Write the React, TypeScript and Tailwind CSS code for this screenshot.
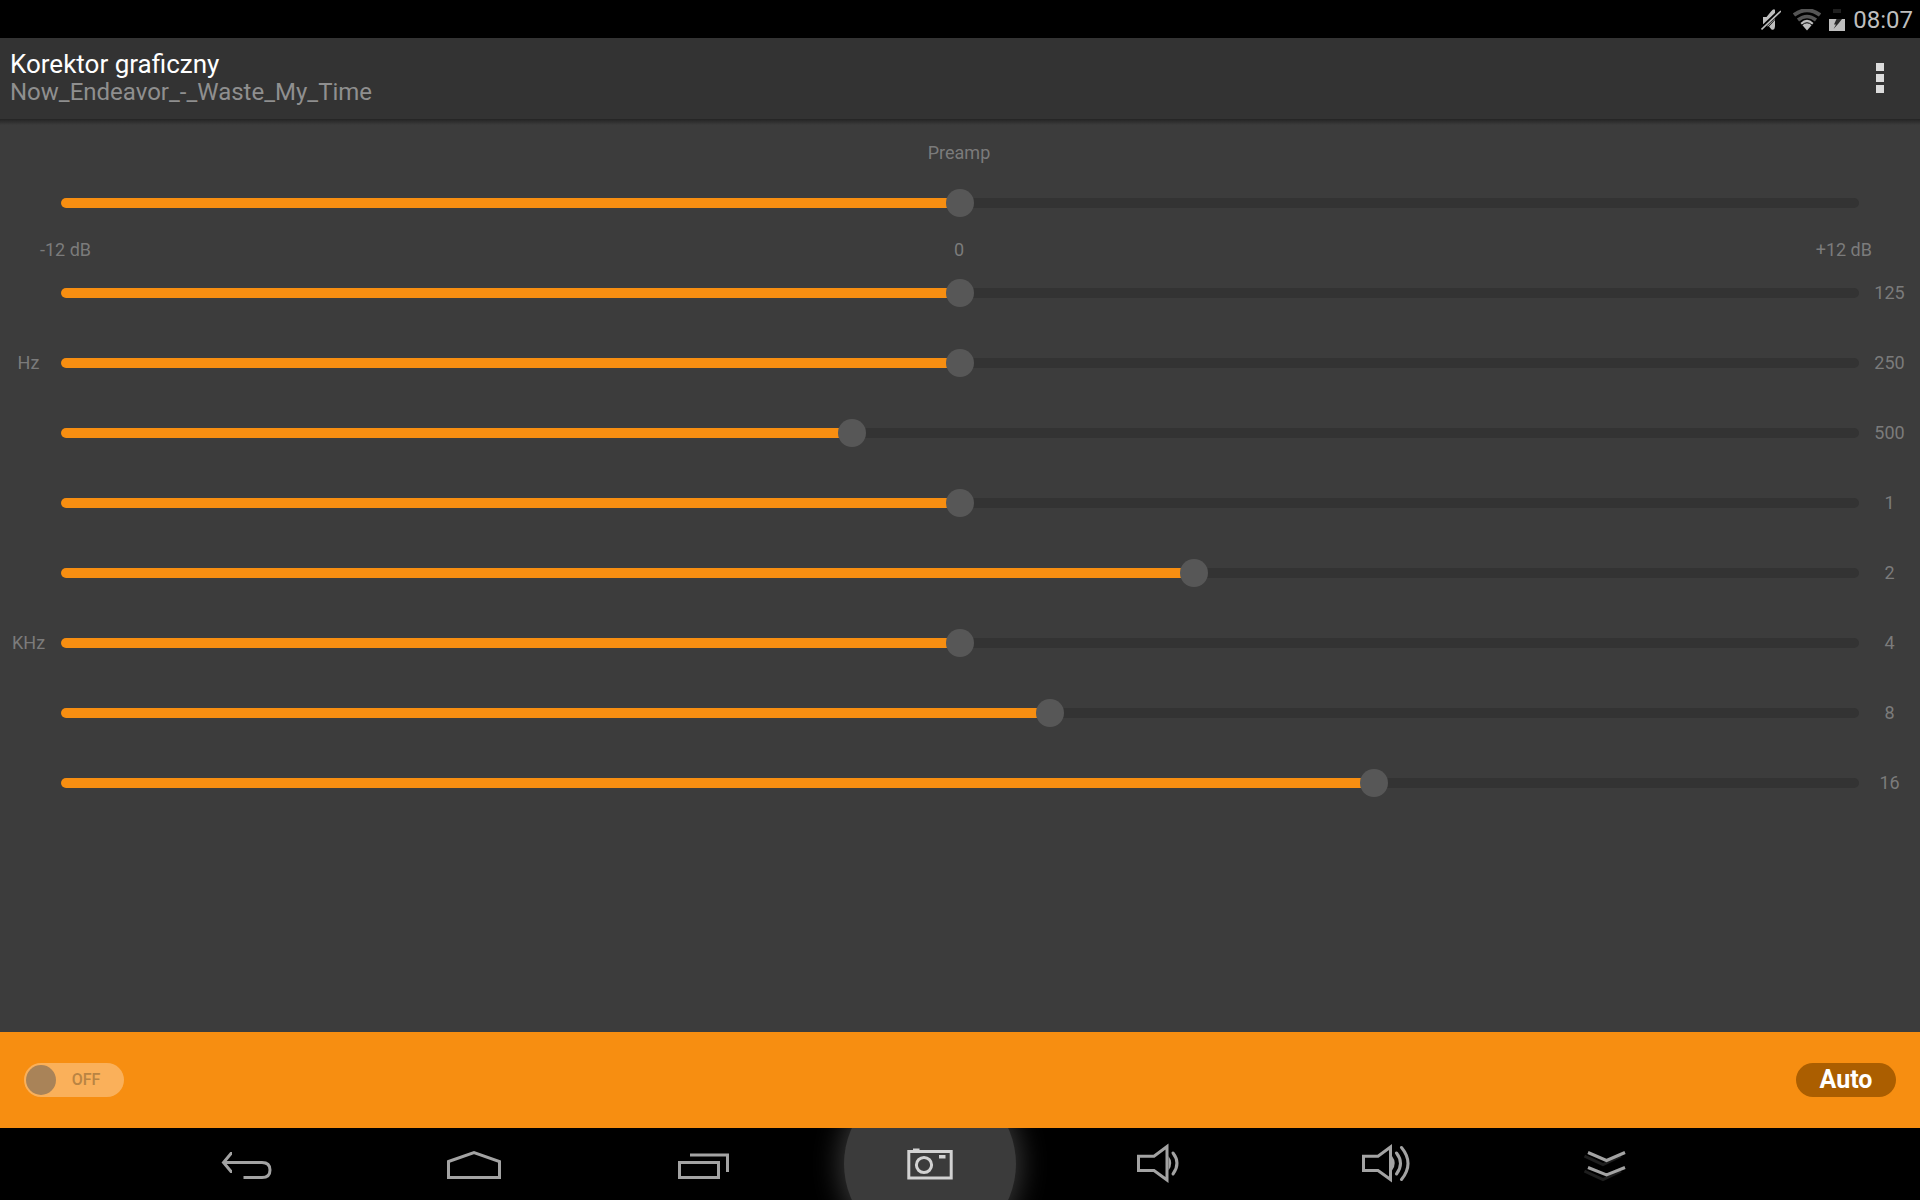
import { useState } from "react";
import type { ReactNode } from "react";

type Band = { label: string; name: string; value: number };

const hzBands: Band[] = [
  { label: "125", name: "125 Hz", value: 0 },
  { label: "250", name: "250 Hz", value: 0 },
  { label: "500", name: "500 Hz", value: -1.44 },
];

const khzBands: Band[] = [
  { label: "1", name: "1 KHz", value: 0 },
  { label: "2", name: "2 KHz", value: 3.12 },
  { label: "4", name: "4 KHz", value: 0 },
  { label: "8", name: "8 KHz", value: 1.2 },
  { label: "16", name: "16 KHz", value: 5.52 },
];

function Slider({ id, initial }: { id: string; initial: number }) {
  const [value, setValue] = useState(initial);
  return (
    <div className="grid h-14 flex-1 items-center">
      <div className="col-start-1 row-start-1 mx-3.5 h-2.5 overflow-hidden rounded-full bg-[#333333]">
        <div className="h-full bg-[#f78e11]" style={{ width: `${((value + 12) / 24) * 100}%` }} />
      </div>
      <input
        id={id}
        type="range"
        min={-12}
        max={12}
        step={0.24}
        value={value}
        onChange={(e) => setValue(Number(e.target.value))}
        className="z-10 col-start-1 row-start-1 h-7 w-full cursor-pointer appearance-none bg-transparent [&::-webkit-slider-thumb]:size-7 [&::-webkit-slider-thumb]:appearance-none [&::-webkit-slider-thumb]:rounded-full [&::-webkit-slider-thumb]:bg-[#575757]"
      />
    </div>
  );
}

function BandGroup({ unit, bands }: { unit: string; bands: Band[] }) {
  return (
    <section className="flex items-center px-3">
      <h2 className="w-[35px] pr-0.5 text-center">{unit}</h2>
      <div className="flex flex-1 flex-col gap-3.5">
        {bands.map((b) => (
          <div key={b.name} className="flex items-center">
            <Slider id={b.name.replace(" ", "-")} initial={b.value} />
            <label htmlFor={b.name.replace(" ", "-")} className="flex w-[35px] justify-center pr-0.5">
              {b.label}
            </label>
          </div>
        ))}
      </div>
    </section>
  );
}

function NavButton({ name, children, active }: { name: string; children: ReactNode; active?: boolean }) {
  return (
    <button
      type="button"
      aria-label={name}
      className={
        active
          ? "flex flex-1 basis-0 items-center justify-center text-[#d2d2d2]"
          : "flex flex-1 basis-0 items-center justify-center text-[#a3a3a3]"
      }
    >
      <span
        className={
          active
            ? "flex size-[172px] shrink-0 items-center justify-center rounded-full bg-[#3b3b3b] shadow-[0_0_28px_4px_#3a3a3a]"
            : "flex items-center justify-center"
        }
      >
        <svg viewBox="0 0 60 60" className="size-15" fill="none" stroke="currentColor" strokeWidth="3" aria-hidden="true">
          {children}
        </svg>
      </span>
    </button>
  );
}

function StatusBar() {
  return (
    <div className="flex h-[38px] items-center justify-end bg-black pt-0.5 pr-[7px] text-[#bebebe]">
      <svg viewBox="0 0 20 22" className="mr-3 h-[22px] w-5" aria-hidden="true">
        <path d="M2 8h3.500L10 2.500Q13 -1 14 1v9L7 17.500 2 15Z" fill="currentColor" />
        <path d="M8 17.500 14 11V17Q13.500 22 10.500 20.500Z" fill="currentColor" />
        <path d="M0 20 19 2" stroke="#000000" strokeWidth="4" />
        <path d="M.500 20.500 20 2" stroke="currentColor" strokeWidth="1.600" />
      </svg>
      <svg viewBox="0 0 28 22" className="mr-2 h-[22px] w-7" fill="none" aria-hidden="true">
        <path d="M1 6Q14 -3.500 27 6" stroke="#555555" strokeWidth="4" />
        <path d="M5 11Q14 4 23 11" stroke="#555555" strokeWidth="3.500" />
        <path d="M7.500 14Q14 7.500 20.500 14L14 21.500Z" fill="currentColor" />
        <path d="M9 16Q14 11.500 19 16" stroke="#000000" strokeWidth="1" />
      </svg>
      <svg viewBox="0 0 16 22" className="mr-2 h-[22px] w-4" aria-hidden="true">
        <path d="M4 0h8v4H4Z" fill="#202020" />
        <path d="M0 10h16v12H0Z" fill="currentColor" />
        <path d="M7.500 10H13L9.500 14.500 4.500 20 7 15.500H5Z" fill="#2a2a2a" />
      </svg>
      <time className="text-[24px] leading-8">08:07</time>
    </div>
  );
}

export default function App() {
  const [on, setOn] = useState(false);
  return (
    <div className="flex min-h-screen flex-col bg-[#3c3c3c] font-['Roboto','Liberation_Sans',sans-serif] text-[18px] leading-6 text-[#7b7b7b]">
      <StatusBar />
      <header className="flex h-[81px] items-center justify-between bg-[#333333] pr-8 pb-0.5 pl-2.5">
        <div>
          <h1 className="text-[26px] leading-7 text-white">Korektor graficzny</h1>
          <p className="text-[24px] leading-7 text-[#8f8f8f]">Now_Endeavor_-_Waste_My_Time</p>
        </div>
        <button type="button" aria-label="Menu" className="flex flex-col gap-[3px] p-1">
          <span className="size-2 bg-[#dcdcdc]" />
          <span className="size-2 bg-[#dcdcdc]" />
          <span className="size-2 bg-[#dcdcdc]" />
        </button>
      </header>
      <div className="h-1.5 bg-linear-to-b from-[#242424] to-[#3c3c3c]" />

      <main className="flex-1 pt-4">
        <div className="pr-0.5 text-center">
          <label htmlFor="preamp">Preamp</label>
        </div>
        <div className="mt-2.5 flex px-[47px]">
          <Slider id="preamp" initial={0} />
        </div>
        <div className="mt-[7px] mb-[3px] grid grid-cols-3 px-10">
          <span>-12 dB</span>
          <span className="pr-0.5 text-center">0</span>
          <span className="pr-2 text-right">+12 dB</span>
        </div>
        <div className="flex flex-col gap-3.5">
          <BandGroup unit="Hz" bands={hzBands} />
          <BandGroup unit="KHz" bands={khzBands} />
        </div>
      </main>

      <footer className="flex h-24 items-center justify-between bg-[#f78e11] px-6">
        <label className="flex h-[34px] w-[100px] cursor-pointer items-center rounded-full bg-[#fab05a] p-0.5 text-[16px] font-medium text-[#b98443]">
          <input
            type="checkbox"
            role="switch"
            checked={on}
            onChange={(e) => setOn(e.target.checked)}
            className="size-[30px] appearance-none rounded-full bg-[#a98358] checked:order-last"
          />
          <span className="flex-1 pr-2 pl-0.5 text-center">{on ? "ON" : "OFF"}</span>
        </label>
        <button type="button" className="h-[34px] w-[100px] rounded-full bg-[#ab5e00] text-[25px] font-bold text-white">
          Auto
        </button>
      </footer>

      <nav className="flex h-18 overflow-hidden bg-black pr-[192px] pl-[132px]">
        <NavButton name="Back">
          <path d="M16 19.500h-1L7.500 28.500 15 37.500h1" />
          <path d="M8 28.500H46Q54 28.500 54 36T46 43.500H27.500" />
        </NavButton>
        <NavButton name="Home">
          <path d="M4.500 27.500 30 18.600 55.500 27.500V43.500H4.500Z" />
        </NavButton>
        <NavButton name="Recent apps">
          <path d="M7.500 28.500H46.500V43.500H7.500ZM18 21H55.500V38" />
        </NavButton>
        <NavButton name="Screenshot" active>
          <path d="M8.800 17.500H51.200V44H8.800Z" />
          <circle cx="24" cy="31" r="7.600" />
          <path d="M39 21h6.500v3.500H39ZM13 14.500h6.500v3H13Z" fill="currentColor" stroke="none" />
        </NavButton>
        <NavButton name="Volume down">
          <path d="M10.500 22.200H26L39 12.500V46L26 36.500H10.500Z" />
          <path d="M40.500 22Q46 29.300 40.500 36.500Z" fill="currentColor" stroke="none" />
          <path d="M45 19Q53 29.300 45 40" strokeLinecap="round" />
        </NavButton>
        <NavButton name="Volume up">
          <path d="M7.500 22.200H22L34.500 13V45.500L22 36.500H7.500Z" />
          <path d="M36 22Q41.500 29.300 36 36.500Z" fill="currentColor" stroke="none" />
          <path d="M40.500 19Q48.500 29.300 40.500 40M45.500 13.500Q58.500 29.300 45.500 45.500" strokeLinecap="round" />
        </NavButton>
        <NavButton name="Hide bar">
          <path d="M.500 22 19 30.500 37 22M.500 37 19 45.500 37 37" stroke="#1e1e1e" />
          <path d="M4 18.500 22.500 26.500 41 18.500M4 33.500 22.500 41 41 33.500" />
        </NavButton>
      </nav>
    </div>
  );
}
